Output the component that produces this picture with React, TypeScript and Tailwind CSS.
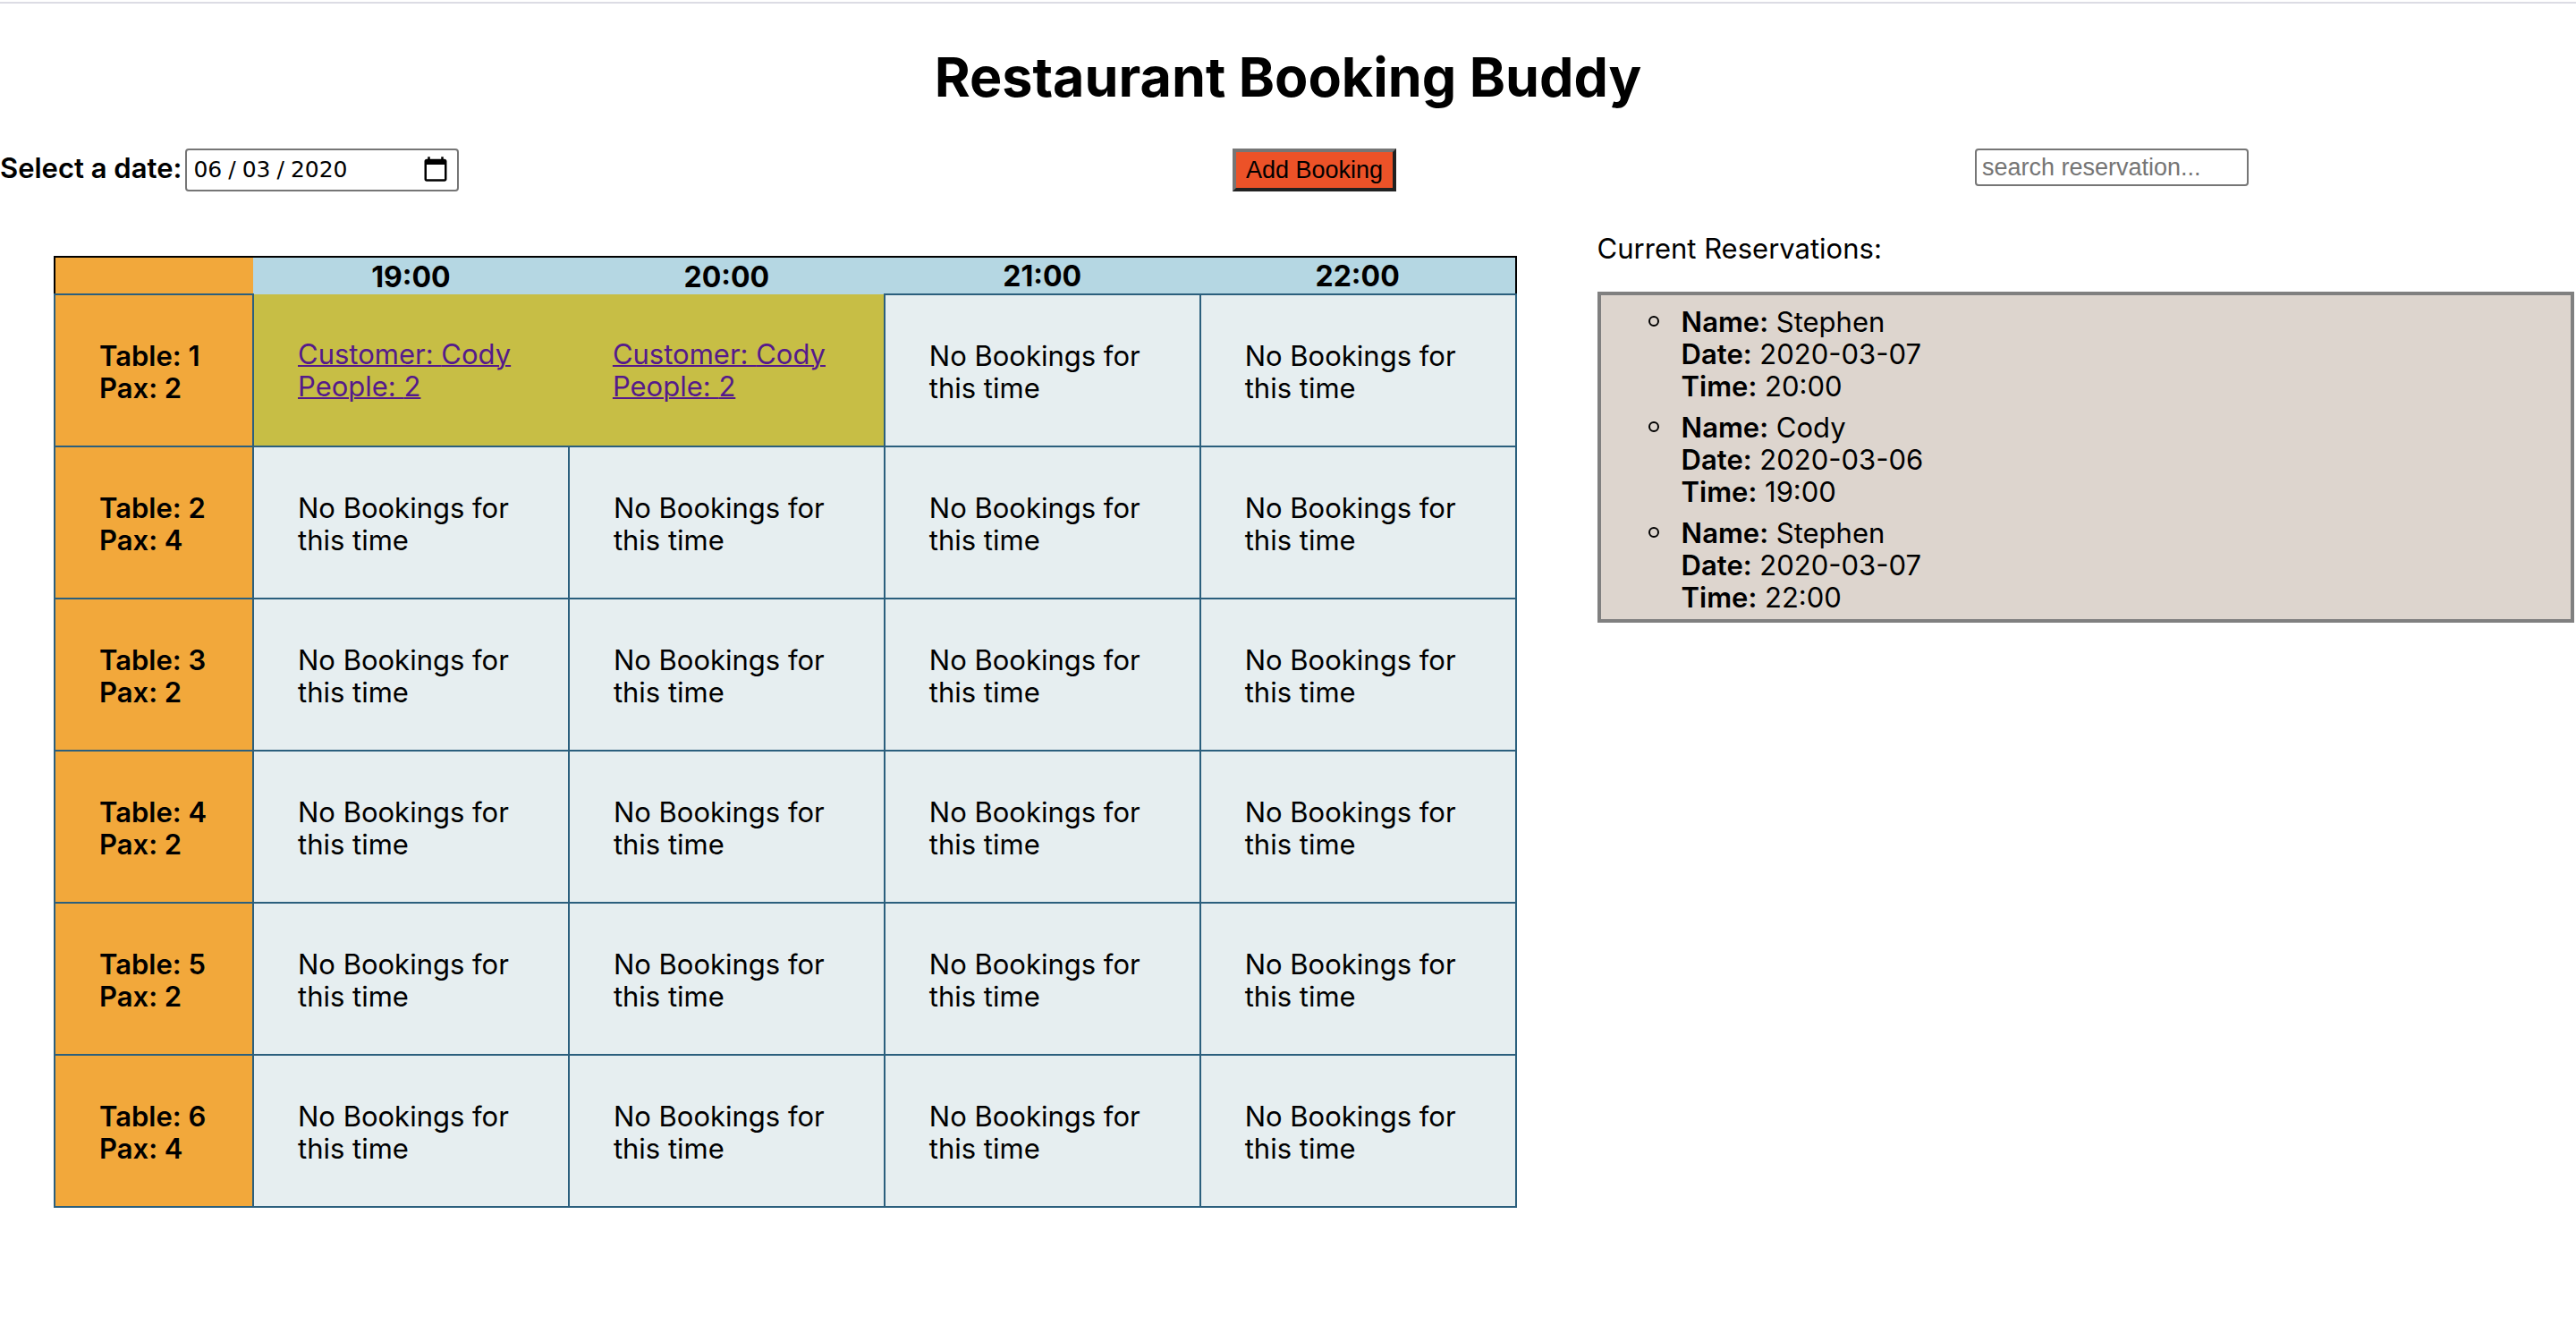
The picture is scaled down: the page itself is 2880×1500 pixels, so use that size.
import React from "react";

type Booking = { customer: string; people: number };
type TableRow = { id: number; pax: number; bookings: Record<string, Booking> };
type Reservation = { name: string; date: string; time: string };

const times = ["19:00", "20:00", "21:00", "22:00"];

const cody: Booking = { customer: "Cody", people: 2 };

const tables: TableRow[] = [
  { id: 1, pax: 2, bookings: { "19:00": cody, "20:00": cody } },
  { id: 2, pax: 4, bookings: {} },
  { id: 3, pax: 2, bookings: {} },
  { id: 4, pax: 2, bookings: {} },
  { id: 5, pax: 2, bookings: {} },
  { id: 6, pax: 4, bookings: {} },
];

const reservations: Reservation[] = [
  { name: "Stephen", date: "2020-03-07", time: "20:00" },
  { name: "Cody", date: "2020-03-06", time: "19:00" },
  { name: "Stephen", date: "2020-03-07", time: "22:00" },
];

function Controls() {
  return (
    <div className="grid grid-cols-[1378fr_830fr_672fr] items-start">
      <div className="flex items-start">
        <label htmlFor="date" className="pt-1 pr-1 font-semibold">
          Select a date:
        </label>
        <input
          id="date"
          type="date"
          defaultValue="2020-06-03"
          className="h-12 w-[306px] rounded border-2 border-[#767676] bg-white px-1.5 font-['DejaVu_Sans'] text-[25px] [&::-webkit-calendar-picker-indicator]:mr-0.5 [&::-webkit-calendar-picker-indicator]:h-8 [&::-webkit-calendar-picker-indicator]:w-8 [&::-webkit-calendar-picker-indicator]:bg-contain [&::-webkit-calendar-picker-indicator]:p-0 [&::-webkit-datetime-edit-text]:px-1.5"
        />
      </div>
      <button
        type="button"
        className="h-12 justify-self-start border-4 border-t-[#767676] border-r-[#212121] border-b-[#212121] border-l-[#767676] bg-[#ec5228] px-[11px] font-['Liberation_Sans'] text-[27px] leading-10"
      >
        Add Booking
      </button>
      <input
        type="text"
        aria-label="search reservation"
        placeholder="search reservation..."
        className="h-[42px] w-[306px] rounded border-2 border-[#767676] bg-white px-1.5 font-['Liberation_Sans'] text-[27px] placeholder:text-[#757575]"
      />
    </div>
  );
}

function Schedule() {
  return (
    <table className="w-full table-fixed border-collapse border-2 border-black text-left">
      <thead>
        <tr className="h-[42px] text-center">
          <td className="w-[222px] bg-[#f2a83b]" />
          {times.map((time) => (
            <th key={time} scope="col" className="bg-[#b5d7e3] p-0 pt-0.5 text-[32px] font-bold">
              {time}
            </th>
          ))}
        </tr>
      </thead>
      <tbody>
        {tables.map((table) => (
          <tr key={table.id} className="h-[170px]">
            <th scope="row" className="border-2 border-[#2b5f7d] bg-[#f2a83b] pt-1 pr-2 pb-0 pl-[49px] font-semibold">
              Table: {table.id}
              <br />
              Pax: {table.pax}
            </th>
            {times.map((time) => {
              const booking = table.bookings[time];
              return booking ? (
                <td key={time} className="bg-[#c7be45] px-[49px] py-0">
                  <a href="#booking" className="text-[#551a8b] underline decoration-2">
                    Customer: {booking.customer}
                    <br />
                    People: {booking.people}
                  </a>
                </td>
              ) : (
                <td key={time} className="border-2 border-[#2b5f7d] bg-[#e6eef0] px-[49px] pt-1 pb-0">
                  No Bookings for this time
                </td>
              );
            })}
          </tr>
        ))}
      </tbody>
    </table>
  );
}

function Reservations() {
  return (
    <section>
      <h2>Current Reservations:</h2>
      <ul className="mt-[30px] border-4 border-[#808080] bg-[#ddd5ce] pt-[7px] pb-[1px] pl-[53px]">
        {reservations.map((r, i) => (
          <li key={i} className="flex gap-[25px] py-[5px]">
            <span aria-hidden="true" className="mt-[11px] size-3 shrink-0 rounded-full border-2 border-black" />
            <div>
              <b className="font-semibold">Name:</b> {r.name}
              <br />
              <b className="font-semibold">Date:</b> {r.date}
              <br />
              <b className="font-semibold">Time:</b> {r.time}
            </div>
          </li>
        ))}
      </ul>
    </section>
  );
}

export default function App() {
  return (
    <div className="pt-0.5 font-['Inter',sans-serif] text-[31px] leading-9 text-black">
      <hr className="border-t-2 border-[#dcdce4]" />
      <h1 className="pt-11 text-center text-[61px] leading-[76px] font-bold">Restaurant Booking Buddy</h1>
      <div className="pt-[42px]">
        <Controls />
      </div>
      <main className="grid grid-cols-[62%_38%]">
        <div className="pt-[72px] pr-[90px] pl-[60px]">
          <Schedule />
        </div>
        <div className="pt-[46px] pr-0.5">
          <Reservations />
        </div>
      </main>
    </div>
  );
}
